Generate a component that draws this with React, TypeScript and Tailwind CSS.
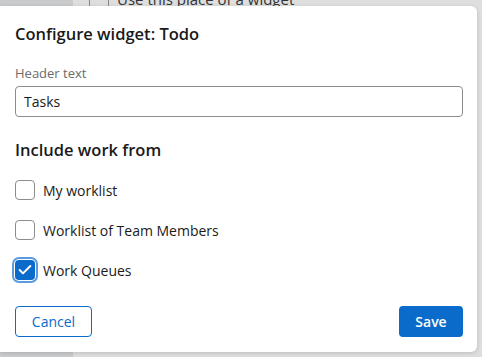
import { Check } from 'lucide-react'

const options = [
  { label: 'My worklist', checked: false },
  { label: 'Worklist of Team Members', checked: false },
  { label: 'Work Queues', checked: true },
]

export default function App() {
  return (
    <div
      className="relative w-[482px] h-[357px] overflow-hidden bg-[#dcdcdc]"
      style={{ fontFamily: '"Open Sans", "Noto Sans", sans-serif' }}
    >
      {/* page behind the backdrop */}
      <div className="absolute inset-0 flex">
        <div className="w-[73px] h-full bg-[#c9cbcd]" />
        <div className="flex-1 h-full bg-[#dedede]">
          <div className="flex items-center gap-2 pl-[16px] -mt-[12px]">
            <div className="w-[20px] h-[20px] rounded border border-[#888]" />
            <span className="text-[15px] text-[#333]">Use this place of a widget</span>
          </div>
        </div>
      </div>

      {/* dialog */}
      <div className="absolute left-0 top-[6px] w-[477px] h-[346px] bg-white rounded-r-[6px] shadow-[0_1px_4px_rgba(0,0,0,0.15)] px-[15px] flex flex-col">
        <h2 className="mt-[16px] text-[16.5px] leading-[24px] font-semibold text-[#1a1a1a]">
          Configure widget: Todo
        </h2>

        <label className="mt-[18px] text-[13px] leading-[18px] text-[#6b6b6b]">Header text</label>
        <input
          defaultValue="Tasks"
          className="mt-[4px] w-[448px] h-[31px] rounded-[4px] border border-[#8c8c8c] px-[8px] text-[14px] text-[#1a1a1a] outline-none"
        />

        <h3 className="mt-[21px] text-[16.5px] leading-[24px] font-semibold text-[#1a1a1a]">
          Include work from
        </h3>

        <div className="mt-[18px] flex flex-col gap-[20px]">
          {options.map((o) => (
            <div key={o.label} className="flex items-center gap-[8px] h-[20px]">
              {o.checked ? (
                <div className="w-[20px] h-[20px] rounded-[4px] bg-[#0b6bcb] flex items-center justify-center ring-2 ring-[#5a9be0] ring-offset-1">
                  <Check className="w-[16px] h-[16px] text-white" strokeWidth={3} />
                </div>
              ) : (
                <div className="w-[20px] h-[20px] rounded-[4px] border border-[#8c8c8c] bg-white" />
              )}
              <span className="text-[14px] text-[#1a1a1a]">{o.label}</span>
            </div>
          ))}
        </div>

        <div className="mt-[26px] flex items-center justify-between w-[448px]">
          <button className="w-[77px] h-[31px] rounded-[4px] border border-[#0b6bcb] text-[14px] text-[#0b6bcb] bg-white">
            Cancel
          </button>
          <button className="w-[64px] h-[31px] rounded-[4px] bg-[#0b6bcb] text-[14px] font-semibold text-white">
            Save
          </button>
        </div>
      </div>
    </div>
  )
}
